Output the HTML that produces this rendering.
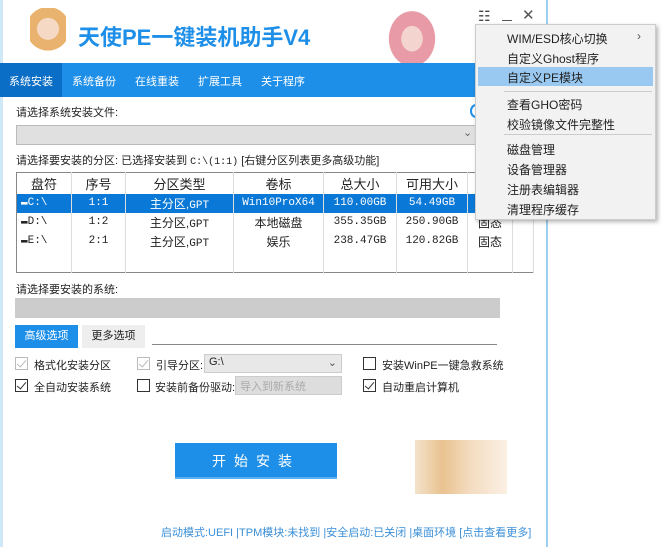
<!DOCTYPE html><html><head><meta charset="utf-8"><style>
*{margin:0;padding:0;box-sizing:border-box}
body{width:662px;height:547px;background:#fff;position:relative;overflow:hidden;font-family:"Liberation Sans","Noto Sans CJK SC",sans-serif;font-size:11px;color:#222}
.a{position:absolute}
.nav{left:0;top:63px;width:547px;height:34px;background:#1e8fe8}
table{border-collapse:collapse;position:absolute;left:16px;top:172px;width:518px;height:101px;border:1px solid #888;font-size:12px}
td{border-right:1px solid #ddd;text-align:center;height:19px;padding:0;white-space:nowrap}
tr.h td{height:21px;font-size:13px}
tr.s td{background:#0a78d7;color:#fff}
.mono{font-family:"Liberation Mono","Noto Sans CJK SC",monospace;font-size:11px}
.cb{position:absolute;width:13px;height:13px;border:1px solid #333;background:#fff}
.cb.c::after{content:"";position:absolute;left:3px;top:0px;width:4px;height:8px;border:solid #333;border-width:0 1.5px 1.5px 0;transform:rotate(40deg)}
.cb.g{border-color:#bbb}.cb.g::after{border-color:#bbb}
.menu{left:475px;top:24px;width:181px;height:196px;background:#f2f2f2;border:1px solid #ccc;box-shadow:2px 2px 4px rgba(0,0,0,.3)}
.menu div{position:absolute;left:31px;font-size:12px}
</style></head><body>
<div class="a" style="left:0;top:0;width:3px;height:547px;background:#cfe8f8"></div>
<div class="a" style="left:546px;top:0;width:2px;height:547px;background:#9bd0f0"></div>
<div class="a" style="left:30px;top:8px;width:36px;height:52px;background:radial-gradient(circle at 50% 40%,#f6d9c4 0 30%,#e9b36f 31% 60%,transparent 61%)"></div>
<div class="a" style="left:78px;top:20px;font-size:22px;font-weight:bold;color:#1e8fe8">天使PE一键装机助手V4</div>
<div class="a" style="left:387px;top:9px;width:50px;height:54px;background:radial-gradient(ellipse at 50% 55%,#f4d4cf 0 30%,#e89aa6 31% 65%,transparent 66%)"></div>
<div class="a" style="left:478px;top:8px;font-size:14px;color:#444">☷</div>
<div class="a" style="left:502px;top:20px;width:10px;height:1px;background:#555"></div>
<div class="a" style="left:522px;top:6px;font-size:15px;color:#555">✕</div>
<div class="a nav"></div>
<div class="a" style="left:0;top:63px;width:62px;height:34px;background:#0b6ec6"></div>
<div class="a" style="left:9px;top:73px;color:#fff">系统安装</div>
<div class="a" style="left:72px;top:73px;color:#fff">系统备份</div>
<div class="a" style="left:135px;top:73px;color:#fff">在线重装</div>
<div class="a" style="left:198px;top:73px;color:#fff">扩展工具</div>
<div class="a" style="left:261px;top:73px;color:#fff">关于程序</div>
<div class="a" style="left:16px;top:104px">请选择系统安装文件:</div>
<div class="a" style="left:470px;top:104px;width:12px;height:14px;border:2px solid #1e8fe8;border-radius:50%;border-right-color:transparent"></div>
<div class="a" style="left:16px;top:125px;width:464px;height:20px;background:#e0e0e0;border:1px solid #bbb"></div>
<div class="a" style="left:463px;top:126px;color:#666;font-size:11px">⌄</div>
<div class="a" style="left:16px;top:152px">请选择要安装的分区: 已选择安装到 <span class="mono" style="font-size:10px">C:\(1:1)</span> [右键分区列表更多高级功能]</div>
<table>
<colgroup><col style="width:55px"><col style="width:54px"><col style="width:108px"><col style="width:90px"><col style="width:73px"><col style="width:71px"><col style="width:45px"><col></colgroup>
<tr class="h"><td>盘符</td><td>序号</td><td>分区类型</td><td>卷标</td><td>总大小</td><td>可用大小</td><td></td><td></td></tr>
<tr class="s"><td style="text-align:left;padding-left:4px" class="mono">▬C:\</td><td class="mono">1:1</td><td>主分区,<span class="mono">GPT</span></td><td class="mono">Win10ProX64</td><td class="mono">110.00GB</td><td class="mono">54.49GB</td><td></td><td style="background:#fff"></td></tr>
<tr><td style="text-align:left;padding-left:4px" class="mono">▬D:\</td><td class="mono">1:2</td><td>主分区,<span class="mono">GPT</span></td><td>本地磁盘</td><td class="mono">355.35GB</td><td class="mono">250.90GB</td><td>固态</td><td></td></tr>
<tr><td style="text-align:left;padding-left:4px" class="mono">▬E:\</td><td class="mono">2:1</td><td>主分区,<span class="mono">GPT</span></td><td>娱乐</td><td class="mono">238.47GB</td><td class="mono">120.82GB</td><td>固态</td><td></td></tr>
<tr><td style="height:22px"></td><td></td><td></td><td></td><td></td><td></td><td></td><td></td></tr>
</table>
<div class="a" style="left:16px;top:281px">请选择要安装的系统:</div>
<div class="a" style="left:15px;top:298px;width:485px;height:20px;background:#ccc;border:1px solid #ccc"></div>
<div class="a" style="left:15px;top:325px;width:63px;height:23px;background:#1e8fe8;color:#fff;text-align:center;line-height:23px">高级选项</div>
<div class="a" style="left:82px;top:325px;width:63px;height:23px;background:#eee;text-align:center;line-height:23px">更多选项</div>
<div class="a" style="left:152px;top:344px;width:345px;height:1px;background:#888"></div>
<div class="cb c g" style="left:15px;top:357px"></div><div class="a" style="left:34px;top:357px">格式化安装分区</div>
<div class="cb c g" style="left:137px;top:357px"></div><div class="a" style="left:156px;top:357px">引导分区:</div>
<div class="a" style="left:204px;top:354px;width:138px;height:19px;background:#e8e8e8;border:1px solid #ccc;font-size:11px;padding:1px 4px">G:\<span style="float:right;color:#555">⌄</span></div>
<div class="cb" style="left:363px;top:357px"></div><div class="a" style="left:382px;top:357px">安装WinPE一键急救系统</div>
<div class="cb c" style="left:15px;top:379px"></div><div class="a" style="left:34px;top:379px">全自动安装系统</div>
<div class="cb" style="left:137px;top:379px"></div><div class="a" style="left:155px;top:379px">安装前备份驱动:</div>
<div class="a" style="left:235px;top:376px;width:107px;height:19px;background:#ddd;border:1px solid #ccc;color:#aaa;padding:1px 4px">导入到新系统</div>
<div class="cb c" style="left:363px;top:379px"></div><div class="a" style="left:382px;top:379px">自动重启计算机</div>
<div class="a" style="left:175px;top:443px;width:162px;height:36px;background:#1e8fe8;color:#fff;font-size:14px;text-align:center;line-height:36px;letter-spacing:8px;border-bottom:2px solid #5ab0f0">开始安装</div>
<div class="a" style="left:415px;top:440px;width:92px;height:54px;background:linear-gradient(90deg,#f3e2cc,#e9c28f 30%,#f4dcc0 60%,#fbf0e4)"></div>
<div class="a" style="left:161px;top:524px;color:#3a8fd8;font-size:11px">启动模式:UEFI |TPM模块:未找到 |安全启动:已关闭 |桌面环境 [点击查看更多]</div>
<div class="a menu">
<div style="top:5px">WIM/ESD核心切换</div><div style="left:161px;top:4px;color:#555">›</div>
<div style="top:25px">自定义Ghost程序</div>
<div class="a" style="left:2px;top:42px;width:175px;height:19px;background:#99c9f0"></div>
<div style="top:44px">自定义PE模块</div>
<div class="a" style="left:28px;top:66px;width:148px;height:1px;background:#ccc"></div>
<div style="top:71px">查看GHO密码</div>
<div style="top:91px">校验镜像文件完整性</div>
<div class="a" style="left:28px;top:109px;width:148px;height:1px;background:#ccc"></div>
<div style="top:116px">磁盘管理</div>
<div style="top:136px">设备管理器</div>
<div style="top:156px">注册表编辑器</div>
<div style="top:176px">清理程序缓存</div>
</div>
</body></html>
